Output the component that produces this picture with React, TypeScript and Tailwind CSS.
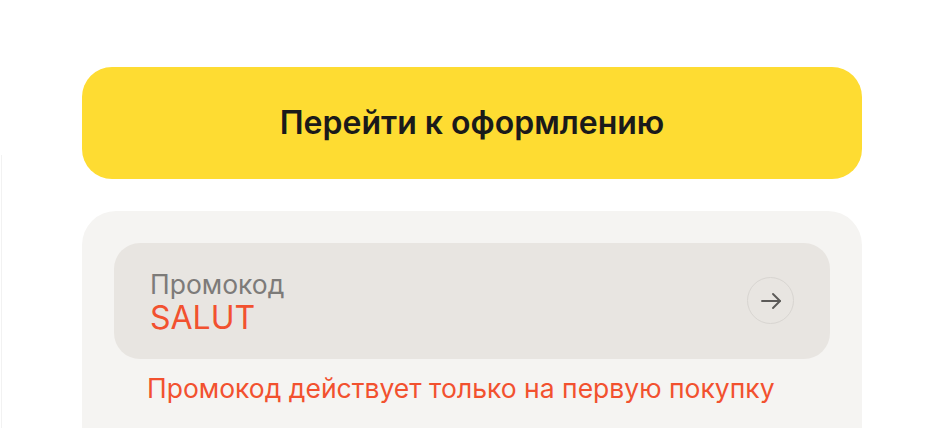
import React from "react";

export default function App() {
  return (
    <div
      className="relative w-[934px] h-[428px] overflow-hidden bg-white"
      style={{ fontFamily: "Inter, 'Noto Sans', sans-serif" }}
    >
      <div className="absolute left-[1px] top-[155px] bottom-0 w-[1px] bg-[#f2f2f2]" />
      <div className="pl-[82px] pt-[67px] w-[862px]">
        <button className="w-[780px] h-[112px] rounded-[30px] bg-[#fedc32] flex items-center justify-center text-[32px] font-semibold text-[#1a1a1a] tracking-[0px]">
          Перейти к оформлению
        </button>
        <div className="mt-[32px] w-[780px] h-[300px] rounded-[34px] bg-[#f5f4f2] pt-[32px] px-[32px]">
          <div className="h-[116px] rounded-[26px] bg-[#e8e5e1] flex items-start pl-[36px] pr-[36px] pt-[26px]">
            <div className="flex-1 flex flex-col">
              <span className="text-[26.5px] leading-[30px] text-[#7d7b79]">Промокод</span>
              <span className="mt-[1px] text-[32px] leading-[36px] text-[#f2512f]">SALUT</span>
            </div>
            <div className="mt-[8px] w-[47px] h-[47px] rounded-full border-[1.5px] border-[#d8d5d1] flex items-center justify-center">
              <svg width="24" height="24" viewBox="0 0 24 24" fill="none" stroke="#5c5a58" strokeWidth="1.9" strokeLinecap="round" strokeLinejoin="round">
                <path d="M3 12h18" />
                <path d="M14 5l7 7-7 7" />
              </svg>
            </div>
          </div>
          <div className="mt-[13px] pl-[33px] text-[26.5px] leading-[32px] text-[#f2512f]">
            Промокод действует только на первую покупку
          </div>
        </div>
      </div>
    </div>
  );
}
